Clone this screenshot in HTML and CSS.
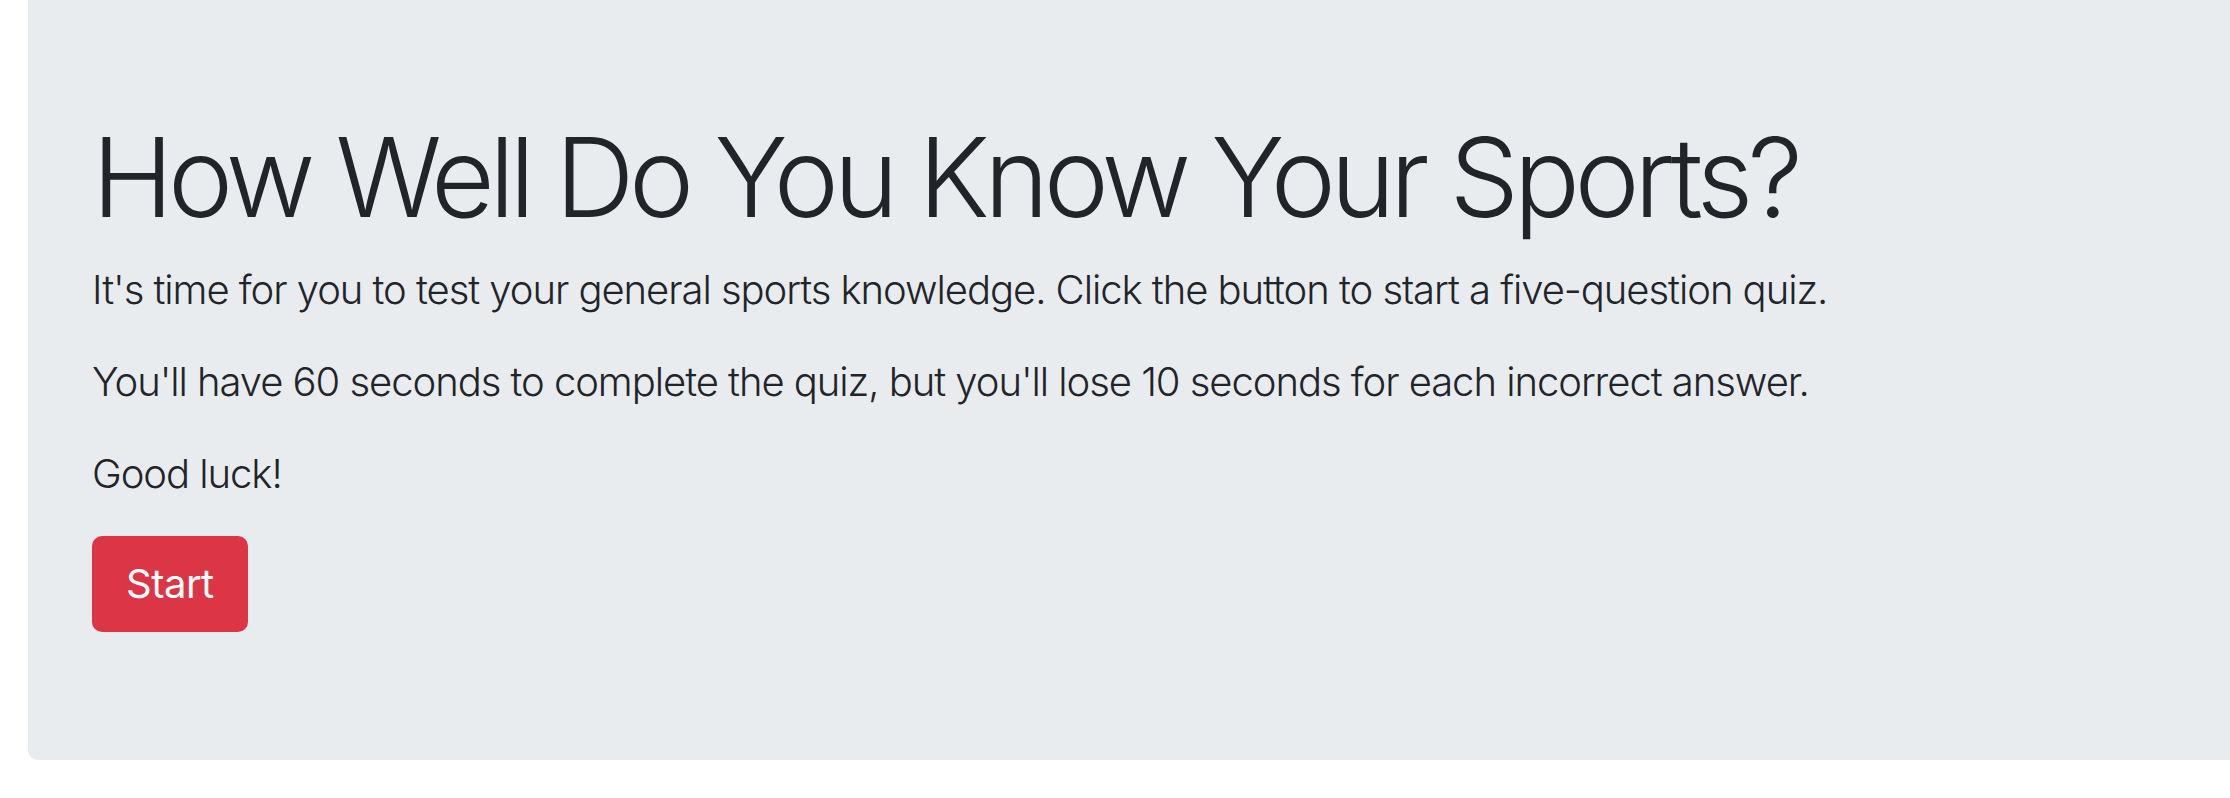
FILE: index.html
```html
<!DOCTYPE html>
<html lang="en">
<head>
<meta charset="utf-8">
<title>Sports Quiz</title>
<link rel="stylesheet" href="styles.css">
</head>
<body>
<main class="jumbotron">
  <h1 class="display">How Well Do You Know Your Sports?</h1>
  <p class="lead">It's time for you to test your general sports knowledge. Click the button to start a five-question quiz.</p>
  <p class="lead">You'll have 60 seconds to complete the quiz, but you'll lose 10 seconds for each incorrect answer.</p>
  <p class="lead">Good luck!</p>
  <button class="btn-start" type="button">Start</button>
</main>
</body>
</html>
```
FILE: styles.css
```css
html, body {
  margin: 0;
  padding: 0;
  background: #fff;
}
body {
  font-family: Inter, "Noto Sans", "Liberation Sans", sans-serif;
  color: #212529;
  overflow: hidden;
}
.jumbotron {
  display: flex;
  flex-direction: column;
  align-items: flex-start;
  margin-left: 28px;
  background: #e9ecef;
  padding: 110px 64px 128px 64px;
  border-radius: 0 0 0 10px;
}
.display {
  margin: 0 0 16px 0;
  font-size: 110px;
  font-weight: 300;
  line-height: 1.22;
  letter-spacing: -5.4px;
}
.lead {
  margin: 0 0 32px 0;
  font-size: 40px;
  font-weight: 300;
  line-height: 1.5;
  letter-spacing: -1.05px;
}
.btn-start {
  font-family: inherit;
  font-size: 40px;
  font-weight: 400;
  line-height: 1.5;
  letter-spacing: -0.5px;
  color: #fff;
  background: #dc3545;
  border: 2px solid #dc3545;
  border-radius: 10px;
  padding: 16px 32px;
  cursor: pointer;
}
```
